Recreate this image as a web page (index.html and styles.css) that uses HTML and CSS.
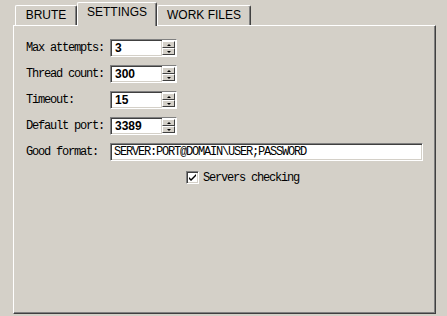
FILE: index.html
```html
<!DOCTYPE html>
<html>
<head>
<meta charset="utf-8">
<link rel="stylesheet" href="styles.css">
</head>
<body>
<div class="window">
  <div class="tabs">
    <div class="tab tab-brute">BRUTE</div>
    <div class="tab tab-settings active">SETTINGS</div>
    <div class="tab tab-work">WORK FILES</div>
  </div>
  <div class="panel">
    <div class="row">
      <span class="label">Max attempts:</span>
      <div class="num"><span class="value">3</span></div>
      <div class="spin"><span class="btn up"></span><span class="btn down"></span></div>
    </div>
    <div class="row">
      <span class="label">Thread count:</span>
      <div class="num"><span class="value">300</span></div>
      <div class="spin"><span class="btn up"></span><span class="btn down"></span></div>
    </div>
    <div class="row">
      <span class="label">Timeout:</span>
      <div class="num"><span class="value">15</span></div>
      <div class="spin"><span class="btn up"></span><span class="btn down"></span></div>
    </div>
    <div class="row">
      <span class="label">Default port:</span>
      <div class="num"><span class="value">3389</span></div>
      <div class="spin"><span class="btn up"></span><span class="btn down"></span></div>
    </div>
    <div class="row">
      <span class="label">Good format:</span>
      <div class="text-field">SERVER:PORT@DOMAIN\USER;PASSWORD</div>
    </div>
    <div class="row check-row">
      <span class="checkbox">
        <svg width="9" height="9" viewBox="0 0 9 9"><path d="M1 4 L3 6 L8 1 L8 3 L3 8 L1 6 Z" fill="#000"/></svg>
      </span>
      <span class="check-label">Servers checking</span>
    </div>
  </div>
</div>
</body>
</html>
```

FILE: styles.css
```css
html, body {
  margin: 0;
  padding: 0;
  background: #d4d0c8;
}
body {
  width: 447px;
  height: 316px;
  overflow: hidden;
}
.window {
  padding: 2px 0 0 13px;
  width: 423px;
}
.tabs {
  display: flex;
  align-items: flex-end;
  height: 24px;
  padding-left: 2px;
  margin-bottom: -1px;
}
.tab {
  box-sizing: border-box;
  height: 20px;
  margin-bottom: 1px;
  border-top: 1px solid #ffffff;
  border-left: 1px solid #ffffff;
  border-right: 1px solid #404040;
  box-shadow: inset -1px 0 #808080;
  border-radius: 2px 2px 0 0;
  font-family: "Liberation Sans", Arial, sans-serif;
  font-size: 12px;
  line-height: 19px;
  color: #000;
  text-align: center;
  background: #d4d0c8;
}
.tab-brute { width: 62px; }
.tab-settings { width: 80px; }
.tab-work { width: 94px; }
.tab.active {
  position: relative;
  z-index: 1;
  height: 24px;
  margin-bottom: 0;
  line-height: 18px;
  padding-bottom: 4px;
}
.panel {
  box-sizing: border-box;
  height: 289px;
  border-top: 1px solid #ffffff;
  border-left: 1px solid #ffffff;
  border-right: 1px solid #404040;
  border-bottom: 1px solid #404040;
  box-shadow: inset -1px -1px #808080;
  padding: 13px 0 0 12px;
  display: flex;
  flex-direction: column;
  gap: 8px;
}
.row {
  display: flex;
  align-items: center;
  height: 18px;
}
.label {
  width: 84px;
  font-family: "Liberation Mono", "Courier New", monospace;
  font-size: 12px;
  letter-spacing: -1.2px;
  color: #000;
}
.num, .text-field {
  box-sizing: border-box;
  height: 18px;
  background: #fff;
  border-top: 1px solid #808080;
  border-left: 1px solid #808080;
  border-right: 1px solid #ffffff;
  border-bottom: 1px solid #ffffff;
  box-shadow: inset 1px 1px #404040, inset -1px -1px #d4d0c8;
  display: flex;
  align-items: center;
}
.num {
  width: 52px;
  border-right: none;
  padding-left: 4px;
}
.value {
  font-family: "Liberation Sans", Arial, sans-serif;
  font-weight: bold;
  font-size: 12px;
  color: #000;
}
.spin {
  box-sizing: border-box;
  width: 15px;
  height: 18px;
  border-top: 1px solid #808080;
  border-bottom: 1px solid #ffffff;
  border-right: 1px solid #ffffff;
  background: #fff;
  display: flex;
  flex-direction: column;
  padding: 1px 1px 1px 0;
}
.btn {
  flex: 1;
  background: #d4d0c8;
  border-top: 1px solid #fff;
  border-left: 1px solid #fff;
  border-right: 1px solid #404040;
  border-bottom: 1px solid #404040;
  box-sizing: border-box;
  position: relative;
}
.btn::after {
  content: "";
  position: absolute;
  left: 50%;
  top: 50%;
  width: 0;
  height: 0;
  border-left: 2px solid transparent;
  border-right: 2px solid transparent;
  transform: translate(-50%, -50%);
}
.btn.up::after { border-bottom: 2px solid #000; }
.btn.down::after { border-top: 2px solid #000; }
.text-field {
  width: 313px;
  padding-left: 3px;
  font-family: "Liberation Mono", "Courier New", monospace;
  font-size: 12px;
  letter-spacing: -1.2px;
  color: #000;
}
.check-row {
  padding-left: 160px;
}
.checkbox {
  box-sizing: border-box;
  width: 13px;
  height: 13px;
  margin-top: -2px;
  background: #fff;
  border-top: 1px solid #808080;
  border-left: 1px solid #808080;
  border-right: 1px solid #ffffff;
  border-bottom: 1px solid #ffffff;
  box-shadow: inset 1px 1px #404040, inset -1px -1px #d4d0c8;
  display: flex;
  align-items: center;
  justify-content: center;
}
.check-label {
  margin-left: 4px;
  font-family: "Liberation Mono", "Courier New", monospace;
  font-size: 12px;
  letter-spacing: -1.2px;
  color: #000;
}
```
